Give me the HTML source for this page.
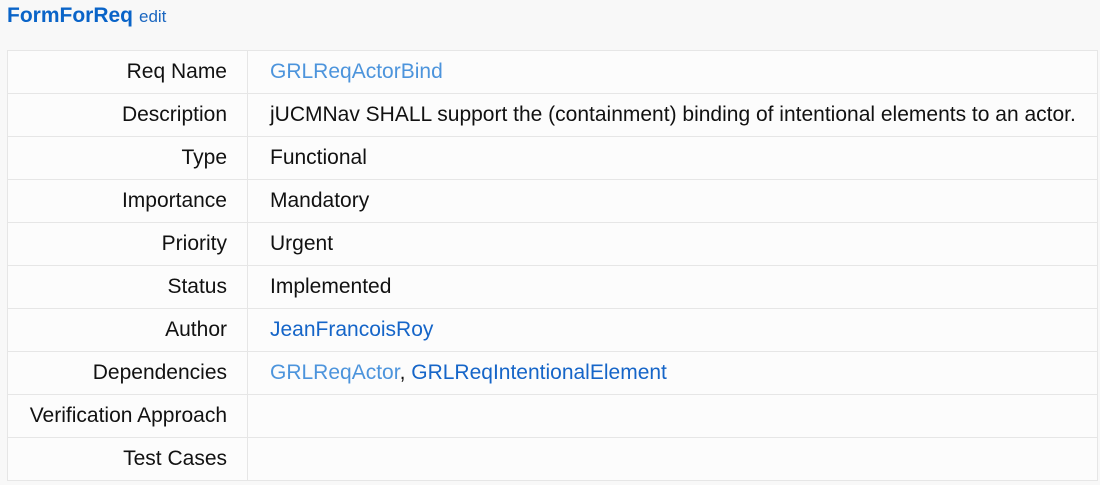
<!DOCTYPE html>
<html><head><style>
body{margin:0;background:#f8f8f8;font-family:"Liberation Sans",sans-serif;width:1100px;height:485px;overflow:hidden}
.t{position:absolute;left:7px;top:4px;font-size:21px}
.t b{color:#0a64c8}
.t span{color:#1a66c0;font-size:17px;margin-left:6px}
table{position:absolute;left:7px;top:50px;width:1091px;border-collapse:collapse;background:#fcfcfc}
td{border:1px solid #e6e6e6;height:42px;padding:0;font-size:21px;color:#111;line-height:42px}
td.l{width:219px;text-align:right;padding-right:20px}
td.v{padding-left:22px}
a{text-decoration:none}
.a1{color:#4c94dc}.a2{color:#1565c8}
</style></head><body>
<div class="t"><b>FormForReq</b><span>edit</span></div>
<table>
<tr><td class="l">Req Name</td><td class="v"><a class="a1">GRLReqActorBind</a></td></tr>
<tr><td class="l">Description</td><td class="v">jUCMNav SHALL support the (containment) binding of intentional elements to an actor.</td></tr>
<tr><td class="l">Type</td><td class="v">Functional</td></tr>
<tr><td class="l">Importance</td><td class="v">Mandatory</td></tr>
<tr><td class="l">Priority</td><td class="v">Urgent</td></tr>
<tr><td class="l">Status</td><td class="v">Implemented</td></tr>
<tr><td class="l">Author</td><td class="v"><a class="a2">JeanFrancoisRoy</a></td></tr>
<tr><td class="l">Dependencies</td><td class="v"><a class="a1">GRLReqActor</a>, <a class="a2">GRLReqIntentionalElement</a></td></tr>
<tr><td class="l">Verification Approach</td><td class="v"></td></tr>
<tr><td class="l">Test Cases</td><td class="v"></td></tr>
</table>
</body></html>
